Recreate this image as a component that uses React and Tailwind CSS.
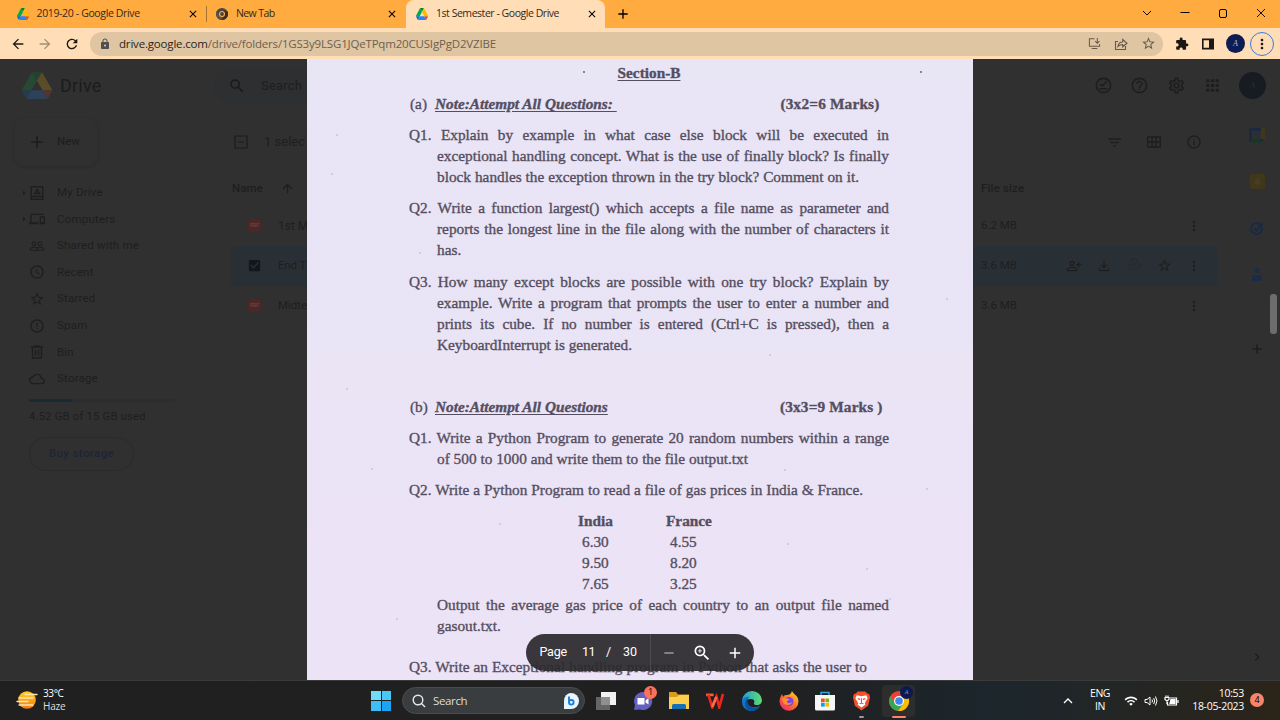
import React from "react";
import {
  MdSearch, MdAdd, MdDevices, MdPeopleOutline, MdAccessTime, MdStarBorder, MdErrorOutline,
  MdCloudQueue, MdArrowUpward, MdFilterList, MdInfoOutline, MdMoreVert, MdApps, MdHelpOutline,
  MdOutlineSettings, MdExtension, MdCheckBox, MdRefresh, MdArrowBack, MdArrowForward, MdLock,
  MdZoomIn, MdRemove, MdChevronRight, MdClose, MdOutlineOfflinePin, MdOutlinePersonAddAlt,
  MdOutlineFileDownload, MdArrowRight, MdWifi,
} from "react-icons/md";

const DriveLogo = ({ className }) => (
  <svg viewBox="0 0 87.3 78" className={className} preserveAspectRatio="none">
    <path d="m6.6 66.85 3.85 6.65c.8 1.4 1.95 2.5 3.3 3.3l13.75-23.8h-27.5c0 1.55.4 3.1 1.2 4.5z" fill="#0066da" />
    <path d="m43.65 25-13.75-23.8c-1.35.8-2.5 1.9-3.3 3.3l-25.4 44a9.06 9.06 0 0 0 -1.2 4.5h27.5z" fill="#00ac47" />
    <path d="m73.55 76.8c1.35-.8 2.5-1.9 3.3-3.3l1.6-2.75 7.65-13.25c.8-1.4 1.2-2.95 1.2-4.5h-27.5l5.85 11.5z" fill="#ea4335" />
    <path d="m43.65 25 13.75-23.8c-1.35-.8-2.9-1.2-4.5-1.2h-18.5c-1.6 0-3.15.45-4.5 1.2z" fill="#00832d" />
    <path d="m59.8 53h-32.3l-13.75 23.8c1.35.8 2.9 1.2 4.5 1.2h50.8c1.6 0 3.15-.45 4.5-1.2z" fill="#2684fc" />
    <path d="m73.4 26.5-12.7-22c-.8-1.4-1.95-2.5-3.3-3.3l-13.75 23.8 16.15 28h27.45c0-1.55-.4-3.1-1.2-4.5z" fill="#ffba00" />
  </svg>
);

const ChromeLogo = ({ className, mono }) => (
  <svg viewBox="0 0 24 24" className={className}>
    <circle cx="12" cy="12" r="12" fill={mono ? "#4b443c" : "#ea4335"} />
    <path d="M1.6 6 A12 12 0 0 0 10.8 23.9 L17.2 15 L12 12 L6.8 15 Z" fill={mono ? "#5c5348" : "#34a853"} />
    <path d="M10.8 23.95 A12 12 0 0 0 22.4 6 H12 L17.2 15 Z" fill={mono ? "#383129" : "#fbbc05"} />
    <circle cx="12" cy="12" r="6" fill={mono ? "#ffab40" : "#fff"} />
    <circle cx="12" cy="12" r={mono ? "3.8" : "4.6"} fill={mono ? "#4b443c" : "#4285f4"} />
  </svg>
);

function Tab({ icon, title, active, className, textClass }) {
  return (
    <div className={`flex h-7 shrink-0 items-center pr-[7px] ${className} ${active ? "rounded-t-lg bg-[#ffddb6]" : ""}`}>
      {icon}
      <span className={`ml-2 whitespace-nowrap ${textClass}`}>{title}</span>
      <MdClose className="ml-auto h-3 w-3 text-black" />
    </div>
  );
}

function TabStrip() {
  return (
    <div className="flex h-7 shrink-0 items-center bg-[#ffab40] text-[10.5px] text-[#33291c]">
      <div className="w-[2px]" />
      <Tab className="w-[204px] pl-[14.5px]" title="2019-20 - Google Drive" textClass="tracking-[-0.36px]" icon={<DriveLogo className="h-3 w-3" />} />
      <div className="h-4 w-px bg-[#a8742f]" />
      <Tab className="w-[198px] pl-[9px]" title="New Tab" textClass="tracking-[-0.6px]" icon={<ChromeLogo mono className="h-3 w-3" />} />
      <div className="w-px" />
      <Tab active className="w-[199px] pl-[10px]" title="1st Semester - Google Drive" textClass="tracking-[-0.46px]" icon={<DriveLogo className="h-3 w-3" />} />
      <MdAdd className="ml-[10px] h-4 w-4 text-black" />
      <div className="ml-auto flex items-center text-black">
        <svg viewBox="0 0 10 10" className="h-[10px] w-[38px]" fill="none" stroke="currentColor"><path d="M1 2l4 4 4-4" /></svg>
        <svg viewBox="0 0 10 10" className="h-[10px] w-[38px]" fill="none" stroke="currentColor"><path d="M.5 3.5h9" /></svg>
        <svg viewBox="0 0 10 10" className="h-[10px] w-[38px]" fill="none" stroke="currentColor"><rect x="1.5" y=".5" width="7" height="8" rx="1.5" /></svg>
        <svg viewBox="0 0 10 10" className="h-[10px] w-[38px]" fill="none" stroke="currentColor" strokeWidth=".9"><path d="M1 0l8 8M9 0l-8 8" /></svg>
      </div>
    </div>
  );
}

function AddressBar() {
  return (
    <div className="flex h-[31px] shrink-0 items-center bg-[#ffddb6] text-[#1c1813]">
      <MdArrowBack className="ml-[10px] h-4 w-4" />
      <MdArrowForward className="ml-[11px] h-4 w-4 text-[#a58e73]" />
      <MdRefresh className="ml-[11px] h-4 w-4" />
      <div className="ml-[10px] flex h-6 w-[1073px] items-center rounded-full bg-[#dfc5a2] pr-[7px] pl-[9px]">
        <MdLock className="h-3 w-3 text-[#4f4f52]" />
        <span className="ml-[8px] text-[11.5px] tracking-[-0.18px] whitespace-nowrap text-[#6e604d]">
          <span className="text-[#2b241b]">drive.google.com</span>/drive/folders/1GS3y9LSG1JQeTPqm20CUSIgPgD2VZIBE
        </span>
        <div className="ml-auto flex items-center gap-[13px] text-[#65594a]">
          <svg viewBox="0 0 14 14" className="h-[13px] w-[13px]" fill="none" stroke="currentColor" strokeWidth="1.1">
            <path d="M7 2H1.5v8h11V7.5M4 12.5h6M10 1v5.5M7.7 4.5L10 6.8l2.3-2.3" />
          </svg>
          <svg viewBox="0 0 14 14" className="h-[14px] w-[14px]" fill="none" stroke="currentColor" strokeWidth="1.1">
            <path d="M4 4.5H1.500v8h10V9M4 9.500c.3-3 2-4.500 4.700-4.500V2.500L13 6.300 8.700 9.800V7.500C6.700 7.500 5.300 8 4 9.500z" />
          </svg>
          <MdStarBorder className="h-[15px] w-[15px]" />
        </div>
      </div>
      <MdExtension className="ml-[12px] h-[14px] w-[14px]" />
      <svg viewBox="0 0 12 12" className="ml-[13px] h-3 w-3"><path d="M0 .5h12v11H0zM1.600 2.200v7.600h5.400V2.200z" fillRule="evenodd" fill="currentColor" /></svg>
      <div className="ml-3 flex h-[19px] w-[19px] items-center justify-center rounded-full bg-[#0d1c52] font-['Liberation_Serif',serif] text-[8px] text-[#b6bedb] italic">A</div>
      <div className="ml-[5px] flex h-6 w-6 items-center justify-center rounded-full border-[1.5px] border-[#3d7be0]">
        <MdMoreVert className="h-4 w-4" />
      </div>
    </div>
  );
}

const navItems = [
  ["My Drive", "drive"],
  ["Computers", MdDevices],
  ["Shared with me", MdPeopleOutline],
  ["Recent", MdAccessTime],
  ["Starred", MdStarBorder],
  ["Spam", MdErrorOutline],
  ["Bin", "bin"],
  ["Storage", MdCloudQueue],
];

function NavIcon({ icon: Icon }) {
  if (Icon === "drive")
    return (
      <svg viewBox="0 0 16 16" className="h-4 w-4" fill="none" stroke="currentColor" strokeWidth="1.400">
        <path d="M2.200 1.700h11.600v12.600H2.200zM2.200 11.500h11.600M6 8.500h4.500L8.200 4.500z" />
      </svg>
    );
  if (Icon === "bin")
    return (
      <svg viewBox="0 0 16 16" className="h-4 w-4" fill="none" stroke="currentColor" strokeWidth="1.300">
        <path d="M3.500 3.500v10.500h9V3.500M2 3h12M5.500 2h5M6.500 5.500v6M9.500 5.500v6" />
      </svg>
    );
  return <Icon className="h-4 w-4" />;
}

function PdfBadge() {
  return <div className="flex h-[13px] w-[13px] shrink-0 items-center justify-center rounded-[2px] bg-[#4c2726] text-[5px] font-bold text-[#6a4543]">PDF</div>;
}

function LeftPane() {
  return (
    <div className="flex w-[307px] shrink-0 flex-col overflow-hidden whitespace-nowrap">
      <div className="flex h-[53px] shrink-0 items-center">
        <DriveLogo className="ml-[22px] h-[27px] w-[30px] shrink-0 opacity-20" />
        <span className="ml-2 w-[154px] shrink-0 text-[18px] tracking-[0.2px] text-[#1b1c1d]">Drive</span>
        <div className="flex h-9 w-[93px] shrink-0 items-center rounded-l-full bg-[#2e2f31] pl-[14px]">
          <MdSearch className="h-[18px] w-[18px] shrink-0 text-[#1b1b1b]" />
          <span className="ml-[15px] text-[13px] tracking-[0.2px]">Search</span>
        </div>
      </div>
      <div className="flex min-h-0 flex-1">
        <div className="flex w-[231px] shrink-0 flex-col">
          <div className="mt-[6px] ml-[14px] flex h-12 w-[84px] shrink-0 items-center rounded-xl bg-[#303030] pl-[13px] text-[#1c1c1c] shadow-[0_1px_3px_0px_#2a2a2a]">
            <MdAdd className="h-5 w-5" />
            <span className="ml-[10px] text-[11.500px]">New</span>
          </div>
          <div className="mt-[13.2px] flex flex-col">
            {navItems.map(([label, icon], i) => (
              <div key={label} className="flex h-[26.65px] items-center">
                <div className="flex w-[29px] justify-end">{i < 2 && <MdArrowRight className="-mr-[1px] h-3 w-3" />}</div>
                <NavIcon icon={icon} />
                <span className="ml-3 text-[11.5px] tracking-[0.2px]">{label}</span>
              </div>
            ))}
          </div>
          <div className="mt-[6.400px] ml-[29px] h-[3px] w-[146px] rounded-full bg-[#2b2d2e]">
            <div className="h-full w-[43px] rounded-full bg-[#1a2a33]" />
          </div>
          <span className="mt-[6.500px] ml-[29px] text-[11.200px] leading-[18px] tracking-[0.23px]">4.52 GB of 15 GB used</span>
          <div className="mt-[10.500px] ml-[29px] flex h-[34px] w-[105px] items-center justify-center rounded-full border border-[#292a2b] text-[11.500px] font-medium tracking-[0.38px] text-[#1e2538]">Buy storage</div>
        </div>
        <div className="flex w-[76px] shrink-0 flex-col">
          <div className="flex h-[60px] items-center pl-[3px]">
            <svg viewBox="0 0 14 14" className="h-[14px] w-[14px]" fill="none" stroke="#1c1c1c" strokeWidth="1.200"><path d="M1 1h12v12H1zM4 7h6" /></svg>
            <span className="ml-4 text-[13px]">1 selec</span>
          </div>
          <div className="flex h-[33px] items-center text-[11.500px] font-medium">
            <span className="w-[49px] pl-[1px] tracking-[0.1px]">Name</span>
            <MdArrowUpward className="h-[15px] w-[15px]" />
          </div>
          <div className="mt-[0.6px] flex h-10 items-center pl-[17px] text-[12px]"><PdfBadge /><span className="ml-[17px]">1st M</span></div>
          <div className="flex h-10 items-center bg-[#293035] pl-[16px] text-[11.500px] tracking-[-0.2px]"><MdCheckBox className="h-[15px] w-[15px] shrink-0 text-[#11171c]" /><span className="ml-4">End T</span></div>
          <div className="flex h-10 items-center pl-[17px] text-[11.500px]"><PdfBadge /><span className="ml-[17px]">Midte</span></div>
        </div>
      </div>
    </div>
  );
}

function RightPane() {
  return (
    <div className="relative flex w-[307px] shrink-0 flex-col overflow-hidden whitespace-nowrap">
      <div className="flex h-[53px] shrink-0 items-center pl-[112px] text-[#1e1e1e]">
        {[MdOutlineOfflinePin, MdHelpOutline, MdOutlineSettings, MdApps].map((Icon, i) => (
          <div key={i} className="flex w-[36.5px] justify-center"><Icon className="h-[19px] w-[19px]" /></div>
        ))}
        <div className="ml-[8px] flex h-[27px] w-[27px] items-center justify-center rounded-full bg-[#171b22] font-['Liberation_Serif',serif] text-[9px] text-[#292d38] italic">A</div>
      </div>
      <div className="flex flex-1">
        <div className="flex w-[244px] flex-col">
          <div className="flex h-[60px] items-center justify-end pr-[3px] text-[#1e1e1e]">
            <div className="flex w-10 justify-center"><MdFilterList className="h-[17px] w-[17px]" /></div>
            <div className="flex w-10 justify-center">
              <svg viewBox="0 0 14 12" className="h-3 w-[14px]" fill="none" stroke="currentColor" strokeWidth="1.300"><path d="M.7 1h12.600v10H.7zM.7 6h12.600M5 1v10M9 1v10" /></svg>
            </div>
            <div className="flex w-10 justify-center"><MdInfoOutline className="h-4 w-4" /></div>
          </div>
          <div className="flex h-[33px] items-center pl-2 text-[11.500px] font-medium tracking-[0.15px]">File size</div>
          <div className="h-[0.6px]" />
          {["6.2 MB", "3.6 MB", "3.6 MB"].map((size, i) => (
            <div key={i} className={`flex h-10 items-center pr-2 pl-2 text-[11.500px] ${i === 1 ? "bg-[#293035]" : ""}`}>
              {size}
              <div className="ml-auto flex text-[#1e1e1e]">
                {i === 1 && (
                  <>
                    <div className="flex w-[30px] justify-center"><MdOutlinePersonAddAlt className="h-4 w-4" /></div>
                    <div className="flex w-[30px] justify-center"><MdOutlineFileDownload className="h-4 w-4" /></div>
                    <div className="flex w-[30px] justify-center">
                      <svg viewBox="0 0 14 12" className="h-3 w-[14px]" fill="none" stroke="#252b2f" strokeWidth="1.300"><path d="M5 1h4l4 7-2 3.500H3L1 8zM5 8h4L7 4.500z" /></svg>
                    </div>
                    <div className="flex w-[30px] justify-center"><MdStarBorder className="h-[15px] w-[15px]" /></div>
                  </>
                )}
                <div className="flex w-[30px] justify-center"><MdMoreVert className="h-4 w-4" /></div>
              </div>
            </div>
          ))}
        </div>
        <div className="ml-5 flex w-10 flex-col items-center">
          <svg viewBox="0 0 16 16" className="mt-[15px] h-4 w-4"><path d="M0 1h14v14H0z" fill="#1c2a40" /><path d="M12 1h4v11h-4z" fill="#40361c" /><path d="M3 12h9v4H3z" fill="#1d3524" /><path d="M3 4h9v8H3z" fill="#2d3033" /><path d="M5 9l2-2 1 1 3-2" stroke="#1f2d44" fill="none" /></svg>
          <div className="mt-[31px] flex h-[15px] w-[15px] items-center justify-center rounded-[2px] bg-[#41371a]"><div className="h-[6px] w-[5px] rounded-full bg-[#483e22]" /></div>
          <svg viewBox="0 0 16 16" className="mt-[31px] h-4 w-4" fill="none" stroke="#1b2948" strokeWidth="2"><circle cx="7.500" cy="8.500" r="5.500" /><path d="M5 8l2.500 2.500L14 3" /></svg>
          <svg viewBox="0 0 16 16" className="mt-[31px] h-4 w-4" fill="#1a2c46"><circle cx="8" cy="3.500" r="2.600" /><path d="M3 9.500q0-1.500 1.500-1.500h7q1.500 0 1.500 1.500V14H3z" /></svg>
          <MdAdd className="mt-[58px] h-4 w-4 text-[#1c1c1c]" />
          <MdChevronRight className="mt-auto mb-[15px] h-4 w-4 text-[#1e1e1e]" />
        </div>
      </div>
      <div className="absolute top-[235px] right-[3px] h-10 w-[7px] rounded-[3px] bg-[#6d6d6d]" />
    </div>
  );
}

function Line({ children, indent, last, width = "" }) {
  return (
    <div className={`h-[20.95px] leading-[21px] ${indent ? "ml-[28px]" : ""} ${width} ${last ? "" : "text-justify [text-align-last:justify]"}`}>
      {children}
    </div>
  );
}

const specks = [[277, 13], [614, 13], [30, 76], [25, 115], [113, 194], [463, 296], [478, 411], [481, 485], [193, 465], [560, 510], [583, 540], [40, 330], [90, 560], [640, 240], [620, 430], [65, 410]];

function ScannedPage() {
  return (
    <div className="relative w-[666px] shrink-0 overflow-hidden bg-linear-to-b from-[#e8e5f5] to-[#ece3f6] pt-[3.200px] font-['Liberation_Serif',serif] text-[15.3px] whitespace-nowrap text-[#554e60] [-webkit-text-stroke:0.35px_#554e60]">
      <svg viewBox="0 0 666 621" className="absolute inset-0 h-full w-full">
        {specks.map(([x, y], i) => <circle key={i} cx={x} cy={y} r={i < 2 ? 0.9 : 0.7} fill={i < 2 ? "#5b5468" : "#aaa1b8"} />)}
      </svg>
      <div className="relative ml-[102px] w-[480px]">
        <div className="text-center font-bold leading-[21px] underline underline-offset-2">Section-B</div>
        <div className="mt-[10px] flex h-[21px] leading-[21px]">
          <span className="w-[26px] pl-px">(a)</span>
          <span className="w-[345.500px] font-bold italic underline underline-offset-2">Note:Attempt All Questions:&nbsp;</span>
          <span className="font-bold tracking-[0.18px]">(3x2=6 Marks)</span>
        </div>
        <div className="mt-[10px]">
          <Line>Q1. Explain by example in what case else block will be executed in</Line>
          <Line indent>exceptional handling concept. What is the use of finally block? Is finally</Line>
          <Line indent width="w-[422px]">block handles the exception thrown in the try block? Comment on it.</Line>
        </div>
        <div className="mt-[10.200px]">
          <Line>Q2. Write a function largest() which accepts a file name as parameter and</Line>
          <Line indent>reports the longest line in the file along with the number of characters it</Line>
          <Line indent last>has.</Line>
        </div>
        <div className="mt-[10.800px]">
          <Line>Q3. How many except blocks are possible with one try block? Explain by</Line>
          <Line indent>example. Write a program that prompts the user to enter a number and</Line>
          <Line indent>prints its cube. If no number is entered (Ctrl+C is pressed), then a</Line>
          <Line indent last>KeyboardInterrupt is generated.</Line>
        </div>
        <div className="mt-[41.800px] flex h-[21px] leading-[21px]">
          <span className="w-[26px] pl-px">(b)</span>
          <span className="w-[345px] font-bold italic underline underline-offset-2">Note:Attempt All Questions</span>
          <span className="font-bold tracking-[0.15px]">(3x3=9 Marks )</span>
        </div>
        <div className="mt-[10px]">
          <Line>Q1. Write a Python Program to generate 20 random numbers within a range</Line>
          <Line indent width="w-[311px]">of 500 to 1000 and write them to the file output.txt</Line>
        </div>
        <div className="mt-[10px]">
          <Line width="w-[454px]">Q2. Write a Python Program to read a file of gas prices in India &amp; France.</Line>
        </div>
        <div className="mt-[9.800px] ml-[169px] grid grid-cols-[88px_60px] leading-[21px]">
          <b>India</b><b>France</b>
          {["6.30", "4.55", "9.50", "8.20", "7.65", "3.25"].map((n) => <span key={n} className="pl-1">{n}</span>)}
        </div>
        <Line indent>Output the average gas price of each country to an output file named</Line>
        <Line indent last>gasout.txt.</Line>
        <div className="mt-[20px]">
          <Line width="w-[458px]">Q3. Write an Exceptional handling program in Python that asks the user to</Line>
        </div>
      </div>
      <div className="absolute top-[575px] left-[219px] flex h-[37px] w-[228px] items-center rounded-full bg-[#2b2a2d]/93 font-['Roboto',sans-serif] text-[12.500px] text-white [-webkit-text-stroke:0]">
        <span className="ml-[13.500px] w-[42.500px] tracking-[-0.2px]">Page</span>
        <span className="w-[24px] tracking-[-0.6px]">11</span>
        <span className="w-[17px]">/</span>
        <span className="w-[27px]">30</span>
        <div className="h-full w-px bg-[#4c4b4f]" />
        <MdRemove className="ml-[10px] h-4 w-4 text-[#a5a5a7]" />
        <MdZoomIn className="ml-[15px] h-5 w-5" />
        <MdAdd className="ml-[14px] h-[18px] w-[18px]" />
      </div>
    </div>
  );
}

const TaskSlot = ({ children, className = "w-[36.5px]" }) => (
  <div className={`relative flex h-8 items-center justify-center ${className}`}>{children}</div>
);

function Taskbar() {
  return (
    <div className="flex h-10 shrink-0 items-center border-t border-[#3a3c3b] bg-linear-to-r from-[#202020] from-60% via-[#1c262c] via-78% to-[#2b2419] text-[11px] whitespace-nowrap text-white">
      <svg viewBox="0 0 22 20" className="ml-4 h-5 w-[22px]">
        <defs><linearGradient id="sun" x2="0" y2="1"><stop stopColor="#ffd21e" /><stop offset="1" stopColor="#f27a1a" /></linearGradient></defs>
        <circle cx="11" cy="9" r="8.800" fill="url(#sun)" />
        <path d="M9 3.500h12M3 7h14M1 10.500h11M3 14h14" stroke="#ffe3b0" strokeWidth="1.300" strokeLinecap="round" />
      </svg>
      <div className="ml-[5px] flex w-[328px] -translate-y-px flex-col text-[10px] leading-[13px]">
        <span className="tracking-[-0.4px]">33°C</span>
        <span className="tracking-[-0.2px] text-[#ddd]">Haze</span>
      </div>
      <div className="grid h-5 w-5 grid-cols-2 gap-px">
        <div className="bg-[#6fdcfb]" /><div className="bg-[#49c8f8]" /><div className="bg-[#3fbdf6]" /><div className="bg-[#1ba4f2]" />
      </div>
      <div className="ml-[11px] flex h-[27px] w-[183px] items-center rounded-full border border-[#4b4c4d] bg-[#3a3d3f] pr-[5px] pl-[9px]">
        <svg viewBox="0 0 14 14" className="h-[14px] w-[14px]" fill="none" stroke="#e8e8e8" strokeWidth="1.400"><circle cx="6" cy="6" r="4.800" /><path d="M9.500 9.500L13 13" /></svg>
        <span className="ml-[7px] text-[11.500px] tracking-[-0.35px] text-[#dcdcdc]">Search</span>
        <svg viewBox="0 0 16 16" className="ml-auto h-4 w-4"><path d="M8 0a8 8 0 1 1 0 16H1V8a7 8 0 0 1 7-8z" fill="#e9f6ff" /><path d="M6 3.500v6.500M6 9q0-2 2.300-2t2.300 2.300T8.300 11.600 6 9.500" fill="none" stroke="#1a7fe0" strokeWidth="1.900" strokeLinejoin="round" /></svg>
      </div>
      <div className="ml-[3px] flex">
        <TaskSlot>
          <svg viewBox="0 0 20 18" className="h-[18px] w-5"><path d="M5 0h15v13H5z" fill="#f1f1f1" /><path d="M0 5h14v13H0z" fill="#777" opacity=".8" /></svg>
        </TaskSlot>
        <TaskSlot>
          <svg viewBox="0 0 20 20" className="h-5 w-5"><path d="M10 1a9 9 0 1 1-3 17.400L1 19l1-5A9 9 0 0 1 10 1z" fill="#6460c0" /><path d="M4.500 7h7v6.500h-7zM12.500 9.500L15.500 7v6.500l-3-2z" fill="#fff" /></svg>
          <div className="absolute top-[1px] right-[4px] flex h-[13px] w-[13px] items-center justify-center rounded-full bg-[#f8735c] text-[9px] text-black">1</div>
        </TaskSlot>
        <TaskSlot>
          <svg viewBox="0 0 20 19" className="h-[19px] w-5"><path d="M0 1h7l2 2.500h11V7H0z" fill="#d99b1c" /><path d="M0 6h8l2-2h10v14H0z" fill="#fccf4d" /><path d="M3 14.500q0-1.500 1.500-1.500h11q1.500 0 1.500 1.500V18H3z" fill="#1670b8" /></svg>
        </TaskSlot>
        <TaskSlot>
          <svg viewBox="0 0 20 17" className="h-4 w-[19px]" fill="none" strokeWidth="2.800"><path d="M0 2h8" stroke="#ff5a3a" /><path d="M2.500 2l4 13 4.500-11 3 11L18 1" stroke="#e8281e" /><path d="M6.500 15L11 4" stroke="#ff6a42" /></svg>
        </TaskSlot>
        <TaskSlot>
          <svg viewBox="0 0 20 20" className="h-5 w-5">
            <defs><linearGradient id="edgeTop" x2="1"><stop stopColor="#1c9ee0" /><stop offset="1" stopColor="#62dc6a" /></linearGradient></defs>
            <path d="M10 0a10 10 0 0 1 10 9c0 3-2 5-5 5-2 0-3.500-.8-3-2 1-1.500 0-4-3-4S0 10 0 10A10 10 0 0 1 10 0z" fill="url(#edgeTop)" />
            <path d="M0 10c1-4 5-5 8-4-3 1-3.500 4-2.500 6.500 1.500 4 7 5 12.500 2.500-3 5-9 6-13 4A10 10 0 0 1 0 10z" fill="#1474cc" />
            <path d="M6 7c-2 4 0 9 6 9.500 2 .2 4-.3 6-1.500-3 5-9 6-12 4-4-3-4-9 0-12z" fill="#0c50a0" />
          </svg>
        </TaskSlot>
        <TaskSlot>
          <svg viewBox="0 0 20 20" className="h-5 w-5">
            <defs><linearGradient id="fox" x1="1" x2="0.2" y2="1"><stop stopColor="#ffe02f" /><stop offset=".5" stopColor="#ff7a2a" /><stop offset="1" stopColor="#f0266b" /></linearGradient></defs>
            <path d="M13 0c1 3 6 4 6.500 10A9.500 9.500 0 1 1 .5 10.500C.5 7 2 5 3 3l1 3c1-2 3-2 4-2 2 0 4-1 5-4z" fill="url(#fox)" />
            <circle cx="10" cy="10.500" r="4.500" fill="#8444dc" />
            <path d="M3 8c3-2 5 0 7 0 1 1-2 1.500-2 2.500 0 2 3 2.500 5 .5 0 4-8 4-9 0z" fill="#ff8d2a" />
          </svg>
        </TaskSlot>
        <TaskSlot>
          <svg viewBox="0 0 20 20" className="h-5 w-5"><path d="M6 5V1.500h8V5" fill="none" stroke="#3ba9e6" strokeWidth="1.400" /><path d="M0 4h20v14q0 1.500-1.500 1.500h-17Q0 19.500 0 18z" fill="#f6f6f6" /><path d="M6 7.500h3.700v3.700H6z" fill="#f25022" /><path d="M10.400 7.500h3.700v3.700h-3.700z" fill="#7fba00" /><path d="M6 11.900h3.700v3.700H6z" fill="#00a4ef" /><path d="M10.400 11.900h3.700v3.700h-3.700z" fill="#ffb900" /></svg>
        </TaskSlot>
        <TaskSlot>
          <svg viewBox="0 0 18 20" className="h-5 w-[17px]"><path d="M5 0h8l2 2 2 .5 1 3.500-2 9-7 5-7-5L0 6l1-3.500L3 2z" fill="#f5502c" /><path d="M4 4l5 1 5-1 1.500 3-3 5 .5 2-4 3-4-3 .5-2-3-5z" fill="#fff" /><path d="M5 7.500l2.500.8M13 7.500l-2.500.8M9 7v5M7 13l2-1 2 1" stroke="#f5502c" strokeWidth="1.200" fill="none" /></svg>
          <div className="absolute -bottom-px h-[2px] w-[5px] rounded bg-[#9a9a9a]" />
        </TaskSlot>
        <TaskSlot className="ml-[2px] w-[33px] rounded bg-[#2d2d2d]">
          <ChromeLogo className="h-5 w-5" />
          <div className="absolute top-[1px] right-[2px] flex h-[13px] w-[13px] items-center justify-center rounded-full bg-[#0c1a50] font-['Liberation_Serif',serif] text-[6px] text-[#8a96c8] italic">A</div>
          <div className="absolute -bottom-px h-[2px] w-[14px] rounded bg-[#f8846c]" />
        </TaskSlot>
      </div>
      <div className="ml-auto flex items-center">
        <svg viewBox="0 0 10 10" className="h-[10px] w-[10px]" fill="none" stroke="#fff" strokeWidth="1.300"><path d="M1 7l4-4 4 4" /></svg>
        <div className="ml-[15px] w-[24px] -translate-y-px text-center text-[10.500px] leading-[13px] tracking-[-0.5px]">ENG<br />IN</div>
        <MdWifi className="ml-[12px] h-[14px] w-[14px]" />
        <svg viewBox="0 0 14 12" className="ml-[6px] h-3 w-[14px]" fill="none" stroke="#fff"><path d="M1 4.500h2L6 2v8L3 7.500H1zM8 4.500q1 1.500 0 3M9.700 3q2 3 0 6M11.500 1.500q3 4.500 0 9" /></svg>
        <svg viewBox="0 0 15 12" className="ml-[6px] h-3 w-[15px]" fill="none" stroke="#fff" strokeWidth="1.200"><path d="M6 3h6.500v7h-9V7M14 5v3" /><path d="M7 4.500h4v4H6z" fill="#fff" /><path d="M1 2.500h4v2L3 6 1 4.500zM2 .5v2M4 .5v2M3 6v3" /></svg>
        <div className="ml-[13px] w-[52px] -translate-y-px text-right text-[10.500px] leading-[13px] tracking-[-0.3px]">10:53<br />18-05-2023</div>
        <div className="mr-[16px] ml-[6px] flex h-[14px] w-[14px] -translate-y-px items-center justify-center rounded-full bg-[#f8846c] text-[9px] text-black">4</div>
      </div>
    </div>
  );
}

export default function App() {
  return (
    <div className="flex h-[720px] w-[1280px] flex-col overflow-hidden bg-[#303030] font-['Open_Sans',sans-serif]">
      <TabStrip />
      <AddressBar />
      <div className="flex h-[621px] shrink-0 bg-[#303030] font-['Roboto',sans-serif] text-[#1e1e1e]">
        <LeftPane />
        <ScannedPage />
        <RightPane />
      </div>
      <Taskbar />
    </div>
  );
}
